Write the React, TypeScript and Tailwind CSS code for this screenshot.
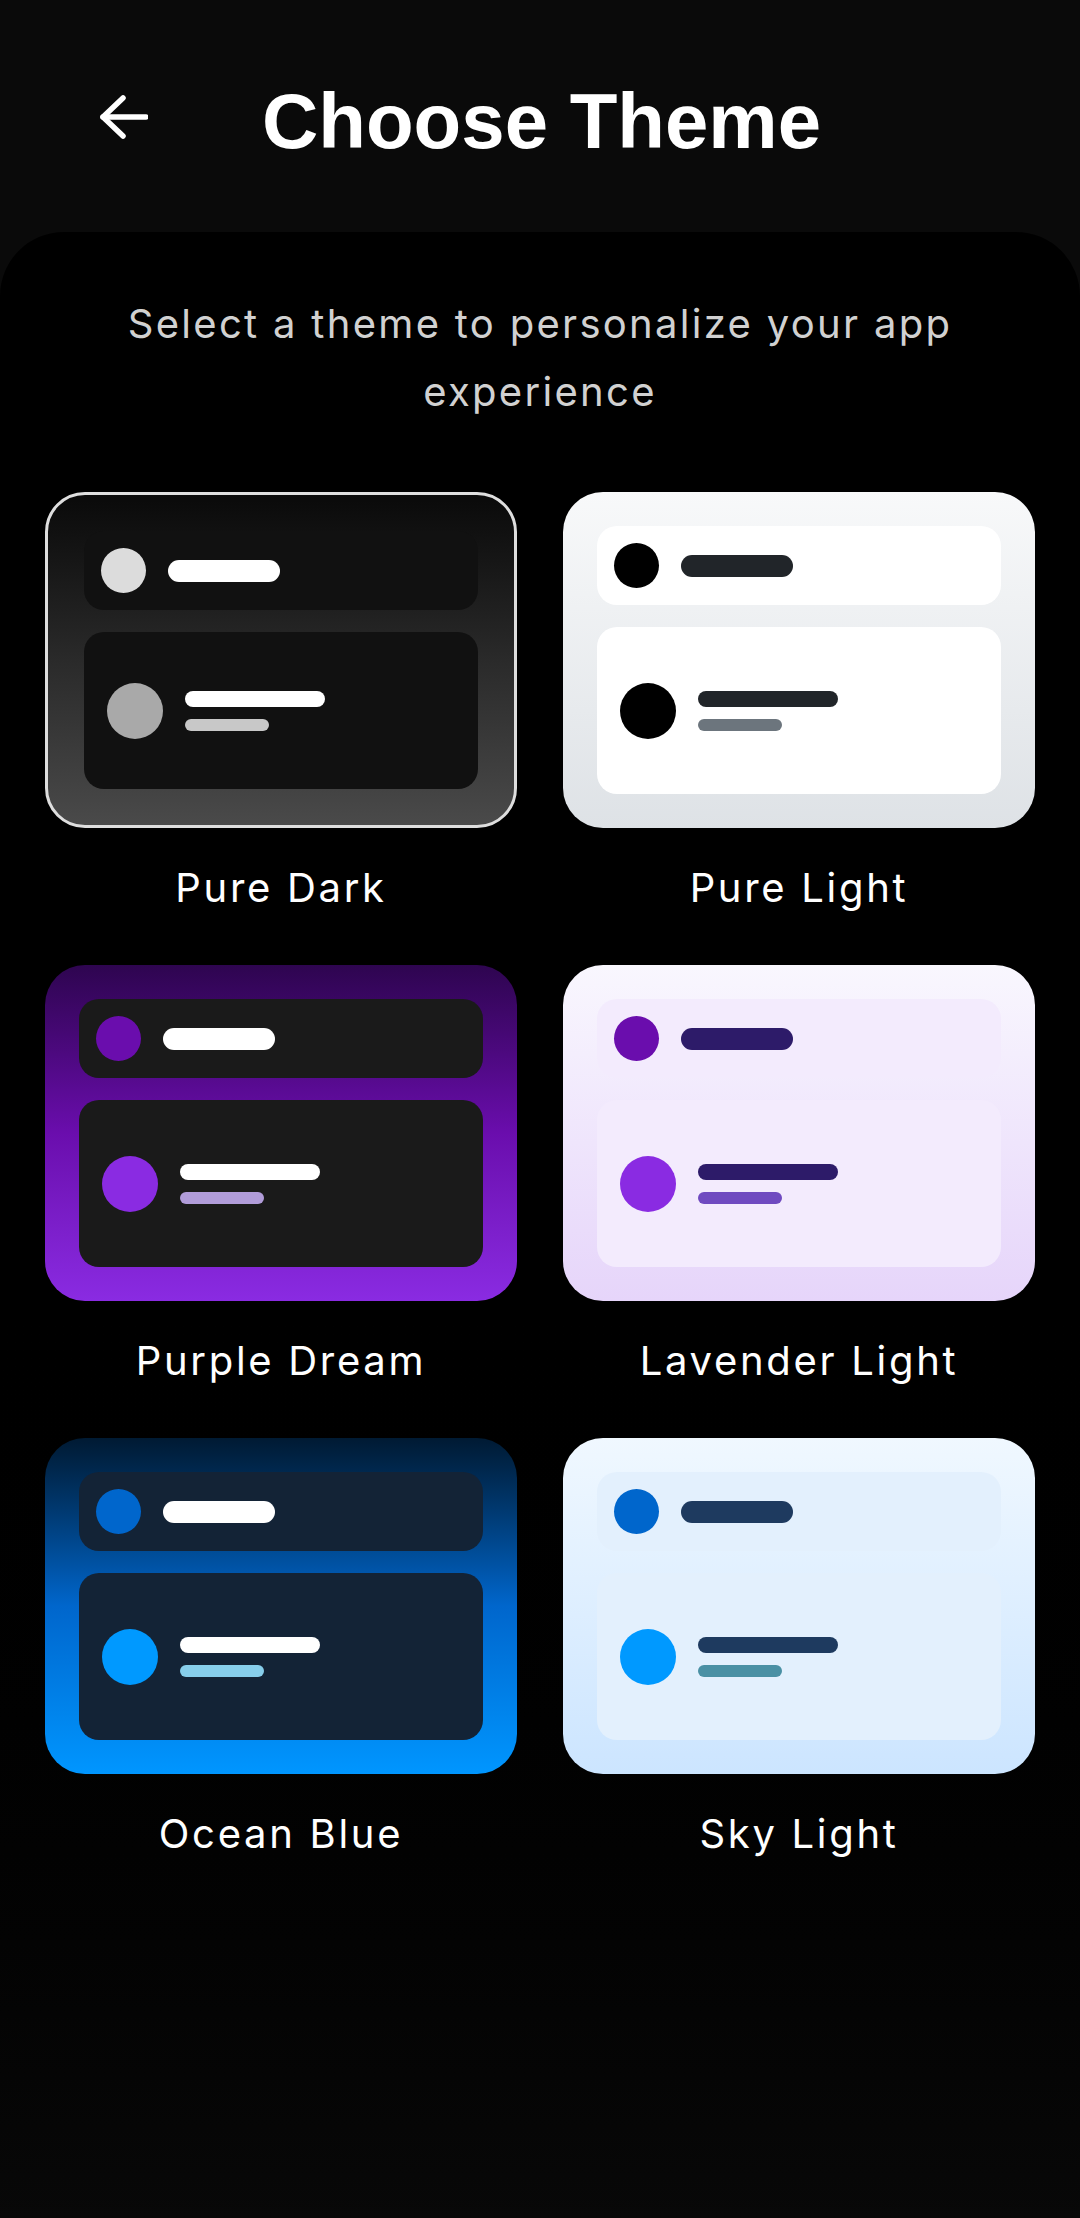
import React from "react";

type Theme = {
  name: string;
  card: string;
  inner: string;
  dotTop: string;
  dotBottom: string;
  bar: string;
  barSub: string;
  selected?: boolean;
};

const themes: Theme[] = [
  {
    name: "Pure Dark",
    card: "bg-linear-to-b from-[#0a0a0a] via-[#2a2a2a] to-[#4a4a4a]",
    inner: "bg-[#111111]",
    dotTop: "bg-[#dcdcdc]",
    dotBottom: "bg-[#a9a9a9]",
    bar: "bg-white",
    barSub: "bg-[#c8c8c8]",
    selected: true,
  },
  {
    name: "Pure Light",
    card: "bg-linear-to-b from-[#f8f9fa] to-[#dee2e6]",
    inner: "bg-white",
    dotTop: "bg-black",
    dotBottom: "bg-black",
    bar: "bg-[#212529]",
    barSub: "bg-[#6c757d]",
  },
  {
    name: "Purple Dream",
    card: "bg-linear-to-b from-[#2e0550] via-[#6a0dad] to-[#8a2be2]",
    inner: "bg-[#1a1a1a]",
    dotTop: "bg-[#6a0dad]",
    dotBottom: "bg-[#8a2be2]",
    bar: "bg-white",
    barSub: "bg-[#b19cd9]",
  },
  {
    name: "Lavender Light",
    card: "bg-linear-to-b from-[#f9f7fe] to-[#e6d5fa]",
    inner: "bg-[#f3ebfd]",
    dotTop: "bg-[#6a0dad]",
    dotBottom: "bg-[#8a2be2]",
    bar: "bg-[#2d1b69]",
    barSub: "bg-[#6f4ac0]",
  },
  {
    name: "Ocean Blue",
    card: "bg-linear-to-b from-[#001a33] via-[#0066cc] to-[#0096ff]",
    inner: "bg-[#132336]",
    dotTop: "bg-[#0066cc]",
    dotBottom: "bg-[#0099ff]",
    bar: "bg-white",
    barSub: "bg-[#87ceeb]",
  },
  {
    name: "Sky Light",
    card: "bg-linear-to-b from-[#f0f8ff] to-[#cce5ff]",
    inner: "bg-[#e3f0fd]",
    dotTop: "bg-[#0066cc]",
    dotBottom: "bg-[#0099ff]",
    bar: "bg-[#1e3a5f]",
    barSub: "bg-[#4a90a4]",
  },
];

function ThemePreview({ theme }: { theme: Theme }) {
  const frame = theme.selected
    ? "border-[3px] border-[#dedede] p-[36px]"
    : "p-[34px]";
  return (
    <div className={`h-[336px] rounded-[40px] flex flex-col gap-[22px] ${frame} ${theme.card}`}>
      <div className={`h-[79px] shrink-0 rounded-[20px] flex items-center pl-[17px] gap-[22px] ${theme.inner}`}>
        <div className={`w-[45px] h-[45px] rounded-full ${theme.dotTop}`} />
        <div className={`w-[112px] h-[22px] rounded-full ${theme.bar}`} />
      </div>
      <div className={`flex-1 rounded-[20px] flex items-center pl-[23px] gap-[22px] ${theme.inner}`}>
        <div className={`w-[56px] h-[56px] rounded-full ${theme.dotBottom}`} />
        <div className="flex flex-col gap-[12px]">
          <div className={`w-[140px] h-[16px] rounded-full ${theme.bar}`} />
          <div className={`w-[84px] h-[12px] rounded-full ${theme.barSub}`} />
        </div>
      </div>
    </div>
  );
}

export default function App() {
  return (
    <div
      className="min-h-[2218px] flex flex-col bg-[#0a0a0a] text-white"
      style={{ fontFamily: "Inter, 'Noto Sans', sans-serif" }}
    >
      <header className="h-[232px] shrink-0 flex items-center pl-[100px]">
        <button className="mt-[2px] w-[48px] h-[44px] flex items-center justify-center">
          <svg width="48" height="44" viewBox="0 0 48 44" fill="none" stroke="white" strokeWidth={5.5} strokeLinecap="round" strokeLinejoin="round">
            <path d="M46 22H3" />
            <path d="M23 3L3 22L23 41" />
          </svg>
        </button>
        <h1
          className="ml-[114px] mt-[10px] text-[78px] leading-none font-bold"
          style={{ fontFamily: "'Liberation Sans', Arial, sans-serif" }}
        >
          Choose Theme
        </h1>
      </header>

      <main className="flex-1 rounded-t-[64px] bg-linear-to-b from-black via-black to-[#080808] pt-[58px] pb-[80px]">
        <p className="px-[90px] text-center text-[40px] leading-[68px] tracking-[2.3px] text-[#d1d1d1]">
          Select a theme to personalize your app experience
        </p>

        <div className="mt-[66px] px-[45px] grid grid-cols-2 gap-x-[46px] gap-y-[53px]">
          {themes.map((t) => (
            <div key={t.name} className="flex flex-col">
              <ThemePreview theme={t} />
              <div className="mt-[36px] text-center text-[40px] leading-[48px] tracking-[2.7px] text-white">
                {t.name}
              </div>
            </div>
          ))}
        </div>
      </main>
    </div>
  );
}
